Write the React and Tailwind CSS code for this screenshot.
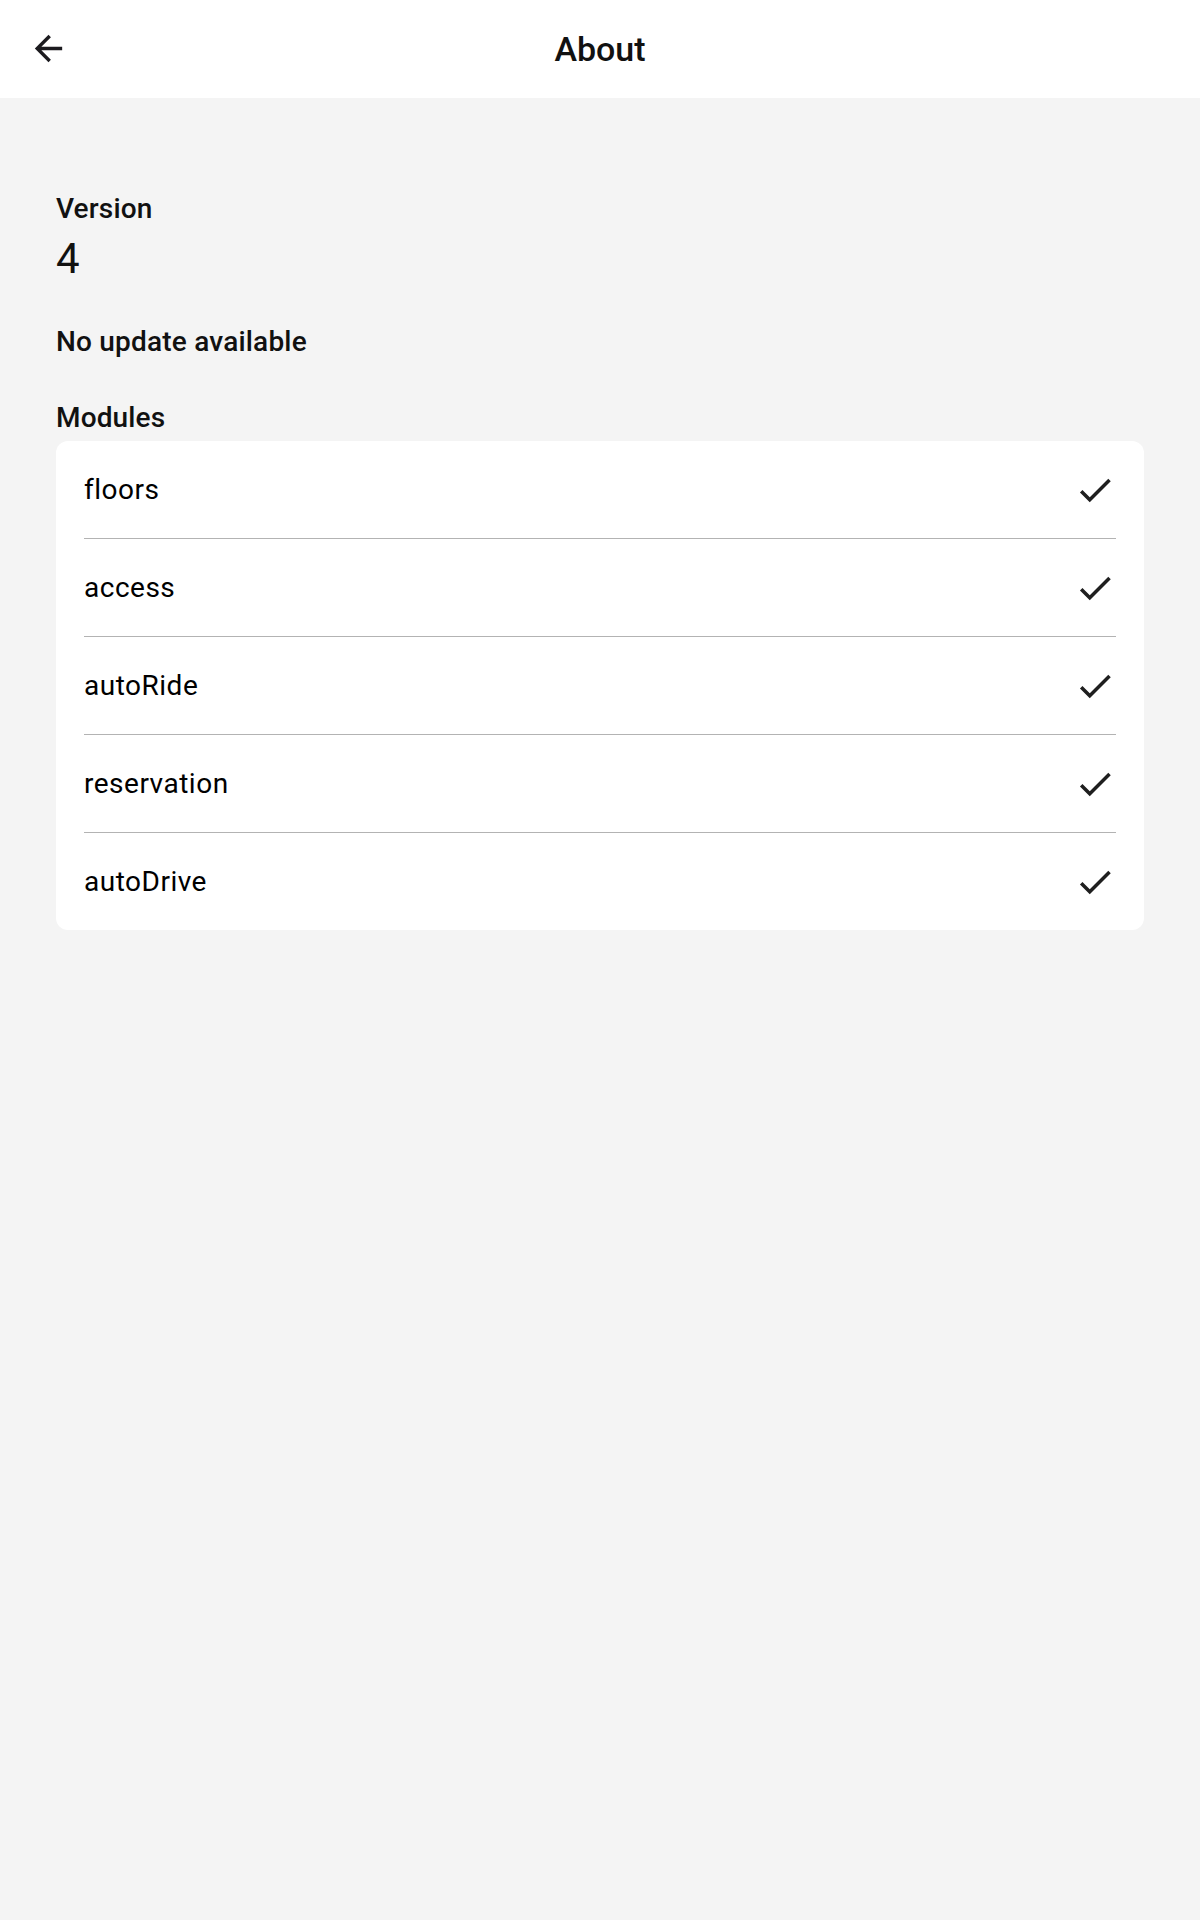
import React from "react";

const modules = ["floors", "access", "autoRide", "reservation", "autoDrive"];

function CheckIcon() {
  return (
    <svg width="42" height="42" viewBox="0 0 24 24" fill="#1f1f1f">
      <path d="M9 16.17L4.83 12l-1.42 1.41L9 19 21 7l-1.41-1.41z" />
    </svg>
  );
}

function BackIcon() {
  return (
    <svg width="41" height="41" viewBox="0 0 24 24" fill="#1c1b1f">
      <path d="M20 11H7.83l5.59-5.59L12 4l-8 8 8 8 1.41-1.41L7.83 13H20v-2z" />
    </svg>
  );
}

export default function App() {
  return (
    <div className="min-h-[1920px] w-[1200px] bg-[#f4f4f4] font-['Roboto',sans-serif] text-[#111111]">
      <header className="relative flex h-[98px] items-center justify-center bg-white">
        <div className="absolute left-[28px] top-[28px] flex h-[41px] w-[41px] items-center justify-center">
          <BackIcon />
        </div>
        <h1 className="text-[34px] font-medium leading-[40px]">About</h1>
      </header>

      <main className="px-[56px] pt-[95px]">
        <div className="text-[28px] font-medium leading-[32px] tracking-[0.15px]">Version</div>
        <div className="mt-[10px] text-[42px] font-normal leading-[48px]">4</div>
        <div className="mt-[43px] text-[28px] font-medium leading-[32px] tracking-[0.2px]">No update available</div>
        <div className="mt-[44px] text-[28px] font-medium leading-[32px] tracking-[0.15px]">Modules</div>

        <div className="mt-[7px] rounded-[12px] bg-white">
          {modules.map((m, i) => (
            <div key={m}>
              {i > 0 && <div className="mx-[28px] h-px bg-[#b3b3b3]" />}
              <div className="flex h-[97px] items-center justify-between pl-[28px] pr-[28px]">
                <span className="text-[28px] font-normal leading-[32px] tracking-[0.5px] text-black">{m}</span>
                <CheckIcon />
              </div>
            </div>
          ))}
        </div>
      </main>
    </div>
  );
}
